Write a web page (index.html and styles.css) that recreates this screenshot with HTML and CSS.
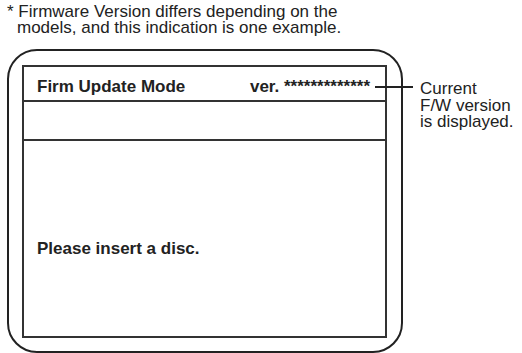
FILE: index.html
```html
<!DOCTYPE html>
<html lang="en">
<head>
    <meta charset="UTF-8">
    <meta name="viewport" content="width=device-width, initial-scale=1.0">
    <title>Firm Update Mode</title>
    <link rel="stylesheet" href="styles.css">
</head>
<body>
    <p class="note">* Firmware Version differs depending on the<br>models, and this indication is one example.</p>

    <div class="figure">
        <div class="screen">
            <div class="panel">
                <div class="panel-head">
                    <span>Firm Update Mode</span>
                    <span>ver. *************</span>
                </div>
                <div class="panel-row"></div>
                <div class="panel-body">Please insert a disc.</div>
            </div>
        </div>
        <div class="callout">Current<br>F/W version<br>is displayed.</div>
        <span class="leader"></span>
    </div>
</body>
</html>
```

FILE: styles.css
```css
body {
    font-family: "Liberation Sans", Arial, sans-serif;
    margin: 0;
    padding: 0;
    background-color: #fff;
    color: #222;
    font-size: 17px;
}

.note {
    margin: 0;
    padding: 4px 0 0 17px;
    text-indent: -10px;
    line-height: 16px;
    height: 41px;
}

.figure {
    position: relative;
    display: flex;
    margin-top: 4px;
}

.screen {
    box-sizing: border-box;
    margin-left: 7px;
    width: 396px;
    height: 304px;
    padding: 14px 14px 13px 13px;
    border: 2px solid #222;
    border-radius: 30px;
}

.panel {
    box-sizing: border-box;
    height: 100%;
    border: 2px solid #333;
    display: flex;
    flex-direction: column;
}

.panel-head {
    height: 35px;
    padding: 10px 15px 0 13px;
    box-sizing: border-box;
    display: flex;
    justify-content: space-between;
    font-weight: bold;
    line-height: 20px;
    border-bottom: 2px solid #333;
}

.panel-row {
    height: 37px;
    border-bottom: 2px solid #333;
}

.panel-body {
    flex: 1;
    padding: 98px 0 0 13px;
    font-weight: bold;
    line-height: 20px;
}

.callout {
    margin-left: 17px;
    padding-top: 32px;
    line-height: 16.5px;
    white-space: nowrap;
}

.leader {
    position: absolute;
    left: 375px;
    top: 37px;
    width: 38px;
    height: 2px;
    background-color: #222;
}
```
